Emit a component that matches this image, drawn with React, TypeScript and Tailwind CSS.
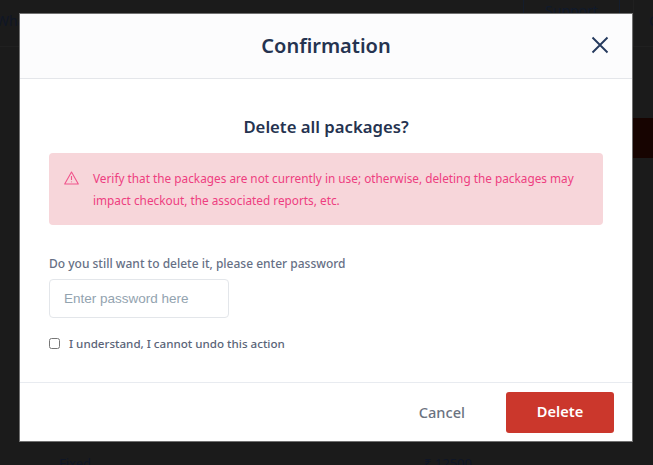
import React from 'react';

const App: React.FC = () => {
  return (
    <div className="relative h-[465px] w-[653px] overflow-hidden bg-[#1b1b1b] font-['Noto_Sans',sans-serif]">
      {/* page behind the backdrop */}
      <div className="flex h-[47px] justify-between border-b border-[#202020] text-sm text-[#0f1626]">
        <span className="ml-[-4px] mt-[11px] whitespace-nowrap">What are Tokens</span>
        <div className="flex h-full items-start">
          <div className="flex h-[40px] w-[97px] justify-center border-x border-[#141d2c] pt-[1px] text-[14px] text-[#101a2c]">
            Support
          </div>
          <div className="ml-[13px] h-full w-[16px] border-l border-[#202020]" />
          <div className="mt-[11px] w-[4px] overflow-hidden text-sm">C</div>
        </div>
      </div>
      <div className="absolute right-0 top-[118px] h-[40px] w-[21px] bg-[#170401]" />
      <div className="absolute left-[59px] top-[454px] text-[13px] text-[#0f1626]">Fixed</div>
      <div className="absolute left-[424px] top-[454px] text-[13px] text-[#0f1626]">₹ 12500</div>

      {/* modal */}
      <div className="absolute left-[20px] top-[14px] flex h-[427px] w-[612px] flex-col bg-white shadow-[0_0_0_1px_#707070]">
        <div className="relative flex h-[64.5px] items-center justify-center border-b border-[#e4e6ea] bg-[#fcfcfd]">
          <h2 className="text-[20px] font-semibold text-[#253350]">Confirmation</h2>
          <button className="absolute right-[23px] top-[22px] text-[#253a5e]">
            <svg width="18" height="18" viewBox="0 0 18 18" fill="none" stroke="currentColor" strokeWidth="1.9">
              <path d="M1.5 1.5 L16.5 16.5 M16.5 1.5 L1.5 16.5" />
            </svg>
          </button>
        </div>

        <div className="flex flex-1 flex-col px-[29px]">
          <h3 className="mt-[36px] text-center text-[16.7px] font-semibold leading-[24px] text-[#253350]">
            Delete all packages?
          </h3>
          <div className="mt-[14px] flex h-[72px] items-start gap-[14px] rounded bg-[#f7d6da] pl-[15px] pr-[20px] pt-[14px]">
            <svg className="mt-[4px] shrink-0" width="15" height="14" viewBox="0 0 15 14" fill="none" stroke="#f0558c" strokeWidth="1.1" strokeLinejoin="round">
              <path d="M7.5 1 L14.3 13 H0.7 Z" />
              <path d="M7.5 5 V9 M7.5 10.4 V11.2" />
            </svg>
            <p className="text-[11.8px] leading-[22px] text-[#ee3e80]">
              Verify that the packages are not currently in use; otherwise, deleting the packages may impact checkout, the associated reports, etc.
            </p>
          </div>
          <label className="mt-[30px] text-xs font-medium leading-[18px] text-[#667085]">
            Do you still want to delete it, please enter password
          </label>
          <input
            className="mt-[6px] h-[39px] w-[180px] rounded border border-[#e3e6ea] px-[14px] font-['Liberation_Sans',sans-serif] text-[13.5px] outline-none placeholder:text-[#93a3af]"
            placeholder="Enter password here"
          />
          <label className="mt-[17px] flex items-center gap-[9px] text-[11.6px] font-medium text-[#5a6478]">
            <input type="checkbox" className="h-[11px] w-[11px]" />
            I understand, I cannot undo this action
          </label>
        </div>

        <div className="flex h-[59px] items-center justify-end gap-[41px] border-t border-[#e8ebf0] pr-[18px]">
          <button className="mt-[1px] text-[14.6px] font-medium text-[#6b7280]">Cancel</button>
          <button className="h-[41px] w-[108px] rounded-[3px] bg-[#cb372c] text-[14.6px] font-semibold text-white">Delete</button>
        </div>
      </div>
    </div>
  );
};

export default App;
